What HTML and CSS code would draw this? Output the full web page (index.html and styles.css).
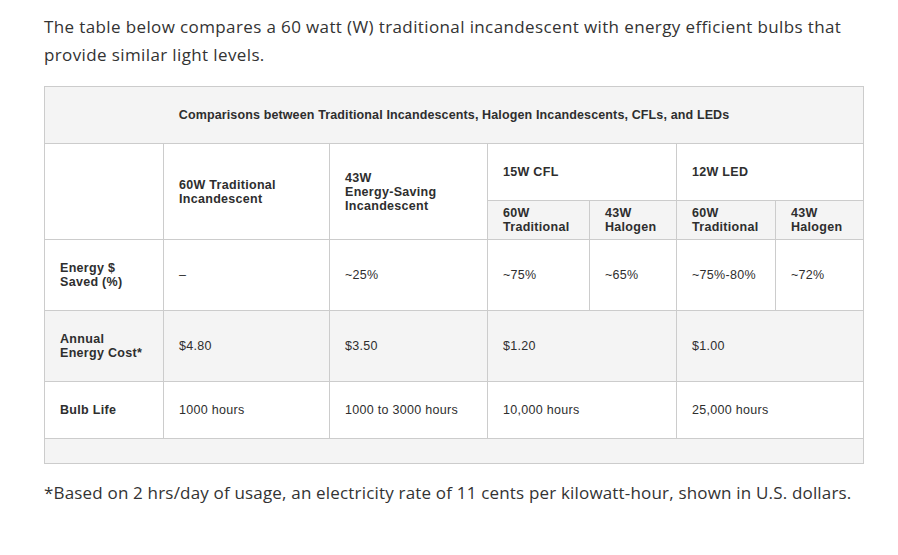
FILE: index.html
```html
<!DOCTYPE html>
<html lang="en">
<head>
<meta charset="utf-8">
<title>Bulb comparison</title>
<link rel="stylesheet" href="styles.css">
</head>
<body>
<main class="content">
  <p class="intro">The table below compares a 60 watt (W) traditional incandescent with energy efficient bulbs that provide similar light levels.</p>
  <table class="compare">
    <colgroup>
      <col class="c1"><col class="c2"><col class="c3"><col class="c4a"><col class="c4b"><col class="c5a"><col class="c5b">
    </colgroup>
    <thead>
      <tr class="r-title"><th colspan="7" class="title">Comparisons between Traditional Incandescents, Halogen Incandescents, CFLs, and LEDs</th></tr>
      <tr class="r-head">
        <th rowspan="2"></th>
        <th rowspan="2">60W Traditional<br>Incandescent</th>
        <th rowspan="2">43W<br>Energy-Saving<br>Incandescent</th>
        <th colspan="2">15W CFL</th>
        <th colspan="2">12W LED</th>
      </tr>
      <tr class="r-sub">
        <th>60W<br>Traditional</th>
        <th>43W<br>Halogen</th>
        <th>60W<br>Traditional</th>
        <th>43W<br>Halogen</th>
      </tr>
    </thead>
    <tbody>
      <tr class="r-two">
        <th>Energy $<br>Saved (%)</th>
        <td>–</td>
        <td>~25%</td>
        <td>~75%</td>
        <td>~65%</td>
        <td>~75%-80%</td>
        <td>~72%</td>
      </tr>
      <tr class="r-two shaded">
        <th>Annual<br>Energy Cost*</th>
        <td>$4.80</td>
        <td>$3.50</td>
        <td colspan="2">$1.20</td>
        <td colspan="2">$1.00</td>
      </tr>
      <tr class="r-one">
        <th>Bulb Life</th>
        <td>1000 hours</td>
        <td>1000 to 3000 hours</td>
        <td colspan="2">10,000 hours</td>
        <td colspan="2">25,000 hours</td>
      </tr>
    </tbody>
    <tfoot>
      <tr class="r-foot"><td colspan="7"></td></tr>
    </tfoot>
  </table>
  <p class="note">*Based on 2 hrs/day of usage, an electricity rate of 11 cents per kilowatt-hour, shown in U.S. dollars.</p>
</main>
</body>
</html>
```

FILE: styles.css
```css
html, body {
  margin: 0;
  padding: 0;
  background: #fff;
}

body {
  font-family: "Open Sans", "Noto Sans", sans-serif;
  color: #333;
}

.content {
  padding: 13px 35px 0 44px;
}

.intro,
.note {
  margin: 0;
  font-size: 17px;
  line-height: 28px;
  color: #333;
}

.intro {
  margin-bottom: 17px;
  letter-spacing: 0.38px;
}

.note {
  margin-top: 15px;
  letter-spacing: 0.18px;
}

.compare {
  width: 819px;
  border-collapse: collapse;
  table-layout: fixed;
  font-family: "Liberation Sans", Arial, sans-serif;
  font-size: 12.5px;
  line-height: 14px;
  letter-spacing: 0.3px;
  color: #2e2e2e;
  border: 1px solid #ccc;
}

.c1 { width: 119px; }
.c2 { width: 166px; }
.c3 { width: 158px; }
.c4a { width: 102px; }
.c4b { width: 87px; }
.c5a { width: 99px; }
.c5b { width: 88px; }

.compare th,
.compare td {
  border: 1px solid #ccc;
  padding: 0 15px;
  text-align: left;
  vertical-align: middle;
}

.compare th {
  font-weight: 700;
}

.compare td {
  font-weight: 400;
}

.compare .title {
  text-align: center;
  letter-spacing: 0.13px;
  background: #f4f4f4;
}

.r-title { height: 57px; }
.r-head { height: 57px; }
.r-sub { height: 39px; }
.r-sub th { background: #f4f4f4; }
.r-two { height: 71px; }
.r-one { height: 57px; }

.shaded th,
.shaded td {
  background: #f4f4f4;
}

.r-foot { height: 25px; }
.r-foot td { background: #f4f4f4; }
```
